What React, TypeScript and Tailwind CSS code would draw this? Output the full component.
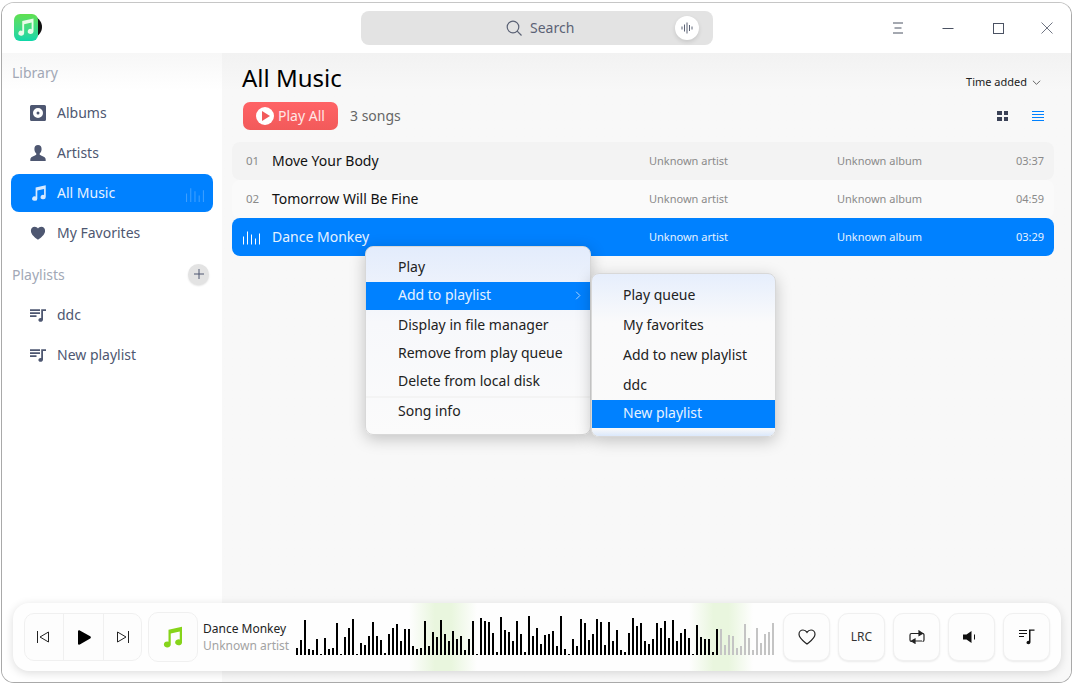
const playedHeights = [
  7, 15, 35, 6, 5, 16, 1, 17, 6, 7, 32, 1, 18, 27, 36, 1, 12, 10, 19, 33, 19, 15, 2, 21, 27, 31, 14, 26, 26, 9,
  6, 7, 34, 9, 23, 18, 35, 21, 14, 24, 16, 19, 5, 16, 34, 1, 37, 34, 33, 22, 3, 38, 25, 23, 14, 34, 21, 3, 39, 19,
  27, 11, 20, 21, 24, 9, 39, 6, 1, 16, 9, 36, 32, 15, 21, 36, 33, 10, 33, 14, 25, 5, 3, 22, 37, 29, 32, 14, 11, 16,
  32, 27, 34, 17, 35, 14, 22, 26, 17, 1, 30, 18, 16, 16, 3, 26,
];
const restHeights = [26, 10, 20, 19, 7, 9, 31, 17, 5, 27, 12, 21, 23, 32];

const songs = [
  { no: "01", title: "Move Your Body", time: "03:37", bg: "bg-[#f3f3f3]" },
  { no: "02", title: "Tomorrow Will Be Fine", time: "04:59", bg: "bg-[#fafafa]" },
  { no: "", title: "Dance Monkey", time: "03:29", bg: "bg-[#0081ff]" },
];

function NoteIcon({ className }: { className: string }) {
  return (
    <svg viewBox="0 0 16 16" className={className} fill="currentColor">
      <path d="M5 3.2 14 1.2V11.6A2.3 2 0 1 1 12.5 9.7V4.4L6.5 5.7V13A2.3 2 0 1 1 5 11.1Z" />
    </svg>
  );
}

function AlbumIcon() {
  return (
    <svg viewBox="0 0 16 16" className="h-4 w-4 text-[#4e5771]" fill="currentColor">
      <path
        fillRule="evenodd"
        d="M1.5 0h13A1.5 1.5 0 0 1 16 1.5v13a1.5 1.5 0 0 1-1.5 1.5h-13A1.5 1.5 0 0 1 0 14.500v-13A1.500 1.500 0 0 1 1.500 0ZM8 3a5 5 0 1 0 0 10A5 5 0 0 0 8 3Zm0 3.500a1.500 1.500 0 1 1 0 3 1.500 1.500 0 0 1 0-3Z"
      />
    </svg>
  );
}

function ArtistIcon() {
  return (
    <svg viewBox="0 0 16 16" className="h-4 w-4 text-[#4e5771]" fill="currentColor">
      <path d="M8 0c2.300 0 3.600 1.700 3.600 3.900 0 1.700-.7 3.300-1.700 4.300-.4.500-.3 1.500.3 1.900 1.500.9 4.700 1.800 5.300 3.500.2.700.2 1.500.2 2.400H.3c0-.9 0-1.700.2-2.400.6-1.700 3.800-2.600 5.300-3.500.6-.4.700-1.400.3-1.900-1-1-1.700-2.600-1.700-4.300C4.400 1.700 5.700 0 8 0Z" />
    </svg>
  );
}

function HeartIcon() {
  return (
    <svg viewBox="0 0 16 16" className="h-4 w-4 text-[#4e5771]" fill="currentColor">
      <path d="M8 14.800C5.500 12.800.9 9.800.9 5.700.9 3.300 2.700 1.700 4.700 1.700c1.400 0 2.600.7 3.300 1.900.7-1.200 1.900-1.900 3.300-1.900 2 0 3.800 1.600 3.800 4 0 4.100-4.600 7.100-7.100 9.100Z" />
    </svg>
  );
}

function PlaylistIcon() {
  return (
    <svg viewBox="0 0 16 16" className="h-4 w-4 text-[#4e5771]" fill="currentColor">
      <path d="M0 2.300h10v1.700H0ZM0 5.300h10v1.700H0ZM0 8.300h6.500v1.700H0ZM11.200 2.300H16v1.800h-3v8.400c0 1.400-1.200 2.300-2.500 2.300-1.200 0-2.100-.7-2.100-1.800 0-1.200 1-2 2.300-2 .2 0 .4 0 .5.100Z" />
    </svg>
  );
}

function EqIcon({ className }: { className: string }) {
  return (
    <svg viewBox="0 0 18 14" className={className} stroke="currentColor" strokeWidth="1" fill="none">
      <path d="M.5 14V6M4.500 14V1M8.500 14V4M12.500 14V8M16.500 14V3" />
    </svg>
  );
}

function Logo() {
  return (
    <div className="relative h-[27px] w-[28px]">
      <div className="absolute right-0 top-[2px] h-[22px] w-[14px] rounded-r-full bg-[#111]" />
      <div className="absolute left-0 top-0 flex h-[27px] w-[24px] items-center justify-center rounded-[6px] bg-gradient-to-b from-[#5fe04e] to-[#0bd6a8]">
        <NoteIcon className="h-[22px] w-[20px] text-[#e9fbe9]" />
      </div>
    </div>
  );
}

function SideItem({ label, icon, active }: { label: string; icon: React.ReactNode; active?: boolean }) {
  return (
    <div
      className={
        active
          ? "relative mx-[9px] flex h-[38px] items-center rounded-[8px] bg-[#0081ff] pl-[19px] text-[#e6f2ff]"
          : "mx-[9px] flex h-[40px] items-center pl-[19px] text-[#4e5771]"
      }
    >
      <div className="flex w-[27px] shrink-0">{icon}</div>
      <span className="pb-[2px] text-[14px]">{label}</span>
      {active && <EqIcon className="absolute right-[8px] top-[13px] h-[15px] w-[19px] text-[#3d9fff]" />}
    </div>
  );
}

function MenuRow({
  label,
  active,
  arrow,
  indent,
  line,
}: {
  label: string;
  active?: boolean;
  arrow?: boolean;
  indent: string;
  line?: boolean;
}) {
  return (
    <div
      className={`flex h-[28px] items-center justify-between text-[14px] ${indent} ${
        active ? "bg-[#0081ff] text-[#e6f2ff]" : "text-[#222]"
      } ${line ? "mb-[2px]" : ""}`}
    >
      <span className="pb-[4px]">{label}</span>
      {arrow && (
        <svg viewBox="0 0 8 12" className="mb-[2px] mr-[9px] h-[9px] w-[6px]" stroke="currentColor" fill="none">
          <path d="M1.500 1l5 5-5 5" />
        </svg>
      )}
    </div>
  );
}

function PlayerButton({ children }: { children: React.ReactNode }) {
  return (
    <div className="flex h-[48px] w-[47px] items-center justify-center rounded-[10px] border border-[#f0f0f0] bg-[#fdfdfd] shadow-[0_1px_2px_rgba(0,0,0,0.08)]">
      {children}
    </div>
  );
}

export default function App() {
  return (
    <div className="h-[684px] w-[1073px] bg-white pb-px pl-px pt-[2px] font-['Noto_Sans',sans-serif]">
      <div className="relative flex h-[681px] w-[1071px] flex-col overflow-hidden rounded-[13px] border border-[#a9a9a9] border-t-[#c6c6c6] bg-white">
        {/* title bar */}
        <div className="flex h-[50px] shrink-0 items-center bg-white">
          <div className="w-[359px] pl-[12px] pb-[2px]">
            <Logo />
          </div>
          <div className="flex h-[34px] w-[352px] items-center rounded-[8px] bg-[#e3e3e3] pb-[1px] pl-[145px] pr-[14px] text-[#5b6275]">
            <svg viewBox="0 0 16 16" className="h-[16px] w-[16px]" fill="none" stroke="currentColor" strokeWidth="1.200">
              <circle cx="7" cy="7" r="5.800" />
              <path d="M11.200 11.200 15.500 15.500" />
            </svg>
            <span className="ml-[8px] text-[14px]">Search</span>
            <div className="ml-auto flex h-[24px] w-[24px] items-center justify-center rounded-full bg-white shadow-[0_2px_4px_rgba(0,0,0,0.12)]">
              <svg viewBox="0 0 12 12" className="h-[12px] w-[12px]" stroke="currentColor" fill="none">
                <path d="M1 4.500v3M3.500 2.500v7M6 .500v11M8.500 3v6M11 4.500v3" />
              </svg>
            </div>
          </div>
          <div className="ml-auto flex items-center text-[#4b5263]">
            <div className="flex w-[50px] justify-center">
              <svg viewBox="0 0 12 12" className="h-[12px] w-[12px]" stroke="currentColor" fill="none">
                <path d="M1 1h10M2.500 6h7M1 11h10" />
              </svg>
            </div>
            <div className="flex w-[50px] justify-center">
              <svg viewBox="0 0 12 12" className="h-[12px] w-[12px]" stroke="currentColor" fill="none">
                <path d="M.5 6.500h11" />
              </svg>
            </div>
            <div className="flex w-[50px] justify-center">
              <svg viewBox="0 0 11 11" className="h-[11px] w-[11px]" stroke="currentColor" fill="none">
                <rect x=".5" y=".5" width="10" height="10" />
              </svg>
            </div>
            <div className="flex w-[48px] justify-center">
              <svg viewBox="0 0 12 12" className="h-[12px] w-[12px]" stroke="currentColor" strokeWidth=".8" fill="none">
                <path d="M.5.5l11 11M11.500.5l-11 11" />
              </svg>
            </div>
          </div>
        </div>

        <div className="flex min-h-0 flex-1">
          {/* sidebar */}
          <div className="w-[220px] shrink-0 bg-gradient-to-b from-[#f7f7f7] to-white to-[6%]">
            <div className="flex h-[40px] items-center pb-[2px] pl-[10px] text-[14px] text-[#a2a8b6]">Library</div>
            <SideItem label="Albums" icon={<AlbumIcon />} />
            <SideItem label="Artists" icon={<ArtistIcon />} />
            <div className="h-px" />
            <SideItem label="All Music" icon={<NoteIcon className="h-[18px] w-[18px] text-[#d5e9ff]" />} active />
            <div className="h-px" />
            <SideItem label="My Favorites" icon={<HeartIcon />} />
            <div className="flex h-[42px] items-center justify-between pl-[10px] pr-[13px] text-[14px] text-[#a2a8b6]">
              <span className="pt-[1px]">Playlists</span>
              <div className="flex h-[21px] w-[21px] items-center justify-center rounded-full bg-[#e3e3e3] shadow-[0_1px_2px_rgba(0,0,0,0.12)]">
                <svg viewBox="0 0 10 10" className="h-[10px] w-[10px] text-[#4e5771]" stroke="currentColor" fill="none">
                  <path d="M5 0v10M0 5h10" />
                </svg>
              </div>
            </div>
            <SideItem label="ddc" icon={<PlaylistIcon />} />
            <SideItem label="New playlist" icon={<PlaylistIcon />} />
          </div>

          {/* main */}
          <div className="flex-1 bg-gradient-to-b from-[#f2f2f2] to-[#f8f8f8] to-[6%] pl-[10px] pr-[17px]">
            <div className="flex h-[49px] items-center justify-between pl-[10px] pr-[13px]">
              <span className="text-[24px] text-black">All Music</span>
              <div className="mt-[10px] flex items-center gap-[5px] text-[11px] text-[#222]">
                <span>Time added</span>
                <svg viewBox="0 0 10 6" className="h-[6px] w-[9px] text-[#555]" stroke="currentColor" fill="none">
                  <path d="M1 .5l4 4 4-4" />
                </svg>
              </div>
            </div>
            <div className="flex h-[28px] items-center pl-[11px] pr-[10px]">
              <div className="flex h-[28px] w-[95px] items-center rounded-[7px] bg-gradient-to-b from-[#ff6366] to-[#f25a5a] pl-[13px] text-[14px] text-[#ffe6e6]">
                <div className="mr-[4px] flex h-[18px] w-[18px] items-center justify-center rounded-full bg-white">
                  <div className="ml-[2px] h-0 w-0 border-y-[5px] border-l-[8px] border-y-transparent border-l-[#f25a5a]" />
                </div>
                <span className="pb-[2px]">Play All</span>
              </div>
              <span className="ml-[12px] pb-[2px] text-[14px] text-[#666]">3 songs</span>
              <div className="ml-auto flex items-center">
                <div className="grid h-[10px] w-[11px] grid-cols-2 gap-[2px]">
                  <div className="bg-[#3b4257]" />
                  <div className="bg-[#3b4257]" />
                  <div className="bg-[#3b4257]" />
                  <div className="bg-[#3b4257]" />
                </div>
                <svg viewBox="0 0 12 10" className="ml-[24px] h-[10px] w-[12px] text-[#0081ff]" stroke="currentColor" fill="none">
                  <path d="M0 .5h12M0 3.500h12M0 6.500h12M0 9.500h12" />
                </svg>
              </div>
            </div>
            <div className="mt-[12px]">
              {songs.map((s) => {
                const on = s.no === "";
                return (
                  <div key={s.title} className={`flex h-[38px] items-center rounded-[8px] ${s.bg}`}>
                    <div className={`w-[40px] pl-[14px] text-[11.500px] ${on ? "text-white" : "text-[#8a8a8a]"}`}>
                      {on ? <EqIcon className="h-[15px] w-[18px] -translate-x-[3px]" /> : s.no}
                    </div>
                    <div className={`w-[377px] pb-[2px] text-[14px] ${on ? "text-[#e6f2ff]" : "text-[#111]"}`}>{s.title}</div>
                    <div className={`w-[188px] text-[11px] ${on ? "text-[#e6f2ff]" : "text-[#8a8a8a]"}`}>Unknown artist</div>
                    <div className={`flex-1 text-[11px] ${on ? "text-[#e6f2ff]" : "text-[#8a8a8a]"}`}>Unknown album</div>
                    <div className={`pr-[10px] text-[11px] ${on ? "text-[#e6f2ff]" : "text-[#8a8a8a]"}`}>{s.time}</div>
                  </div>
                );
              })}
            </div>
          </div>
        </div>

        {/* context menu */}
        <div className="absolute left-[363px] top-[243px] h-[189px] w-[226px] overflow-hidden rounded-[8px] border border-[#d8d8d8] bg-gradient-to-b from-[#e3ecfc] via-[#f7f8fb] via-[40%] to-[#fbfbfb] pt-[7px] shadow-[0_4px_16px_rgba(0,0,0,0.22)]">
          <MenuRow label="Play" indent="pl-[32px]" />
          <MenuRow label="Add to playlist" indent="pl-[32px]" active arrow line />
          <MenuRow label="Display in file manager" indent="pl-[32px]" />
          <MenuRow label="Remove from play queue" indent="pl-[32px]" />
          <MenuRow label="Delete from local disk" indent="pl-[32px]" />
          <div className="h-[2px] bg-[#f4f4f4]" />
          <MenuRow label="Song info" indent="pl-[32px]" />
        </div>

        {/* submenu */}
        <div className="absolute left-[589px] top-[270px] h-[164px] w-[185px] overflow-hidden rounded-[8px] border border-[#d8d8d8] bg-gradient-to-b from-[#e6eefc] via-[#fafafb] via-[30%] to-[#fafafa] pt-[7px] shadow-[0_4px_16px_rgba(0,0,0,0.22)]">
          <MenuRow label="Play queue" indent="pl-[31px] pt-[2px]" line />
          <MenuRow label="My favorites" indent="pl-[31px] pt-[2px]" line />
          <MenuRow label="Add to new playlist" indent="pl-[31px] pt-[2px]" line />
          <MenuRow label="ddc" indent="pl-[31px] pt-[2px]" />
          <div className="h-px" />
          <MenuRow label="New playlist" indent="pl-[31px]" active />
          <div className="h-[8px] bg-gradient-to-b from-[#fafafa] to-[#dbe8fb]" />
        </div>

        {/* player bar */}
        <div className="absolute bottom-[11px] left-[11px] right-[10px] flex h-[68px] items-center overflow-hidden rounded-[16px] bg-[#fefefe] pl-[11px] pr-[11px] shadow-[0_2px_10px_rgba(0,0,0,0.14)]">
          <div className="absolute inset-y-0 left-[396px] w-[68px] bg-[linear-gradient(90deg,transparent,#e9f6de_38%,#e9f6de_62%,transparent)]" />
          <div className="absolute inset-y-0 left-[676px] w-[64px] bg-[linear-gradient(90deg,transparent,#e9f6de_38%,#e9f6de_62%,transparent)]" />
          <div className="relative flex h-[48px] w-[118px] items-center rounded-[10px] border border-[#f0f0f0] bg-[#fdfdfd]">
            <div className="flex h-full w-[39px] items-center justify-center border-r border-[#f0f0f0] pr-[3px]">
              <svg viewBox="0 0 12 12" className="h-[12px] w-[12px] text-[#222]" stroke="currentColor" fill="none">
                <path d="M.5 0v12M11.500 1v10L3 6Z" />
              </svg>
            </div>
            <div className="flex h-full w-[40px] items-center justify-center border-r border-[#f0f0f0]">
              <svg viewBox="0 0 14 15" className="h-[15px] w-[14px] text-black" fill="currentColor">
                <path d="M1 1.500C1 .5 2 0 2.800.4l10.400 5.800c.9.500.9 1.800 0 2.300L2.800 14.600C2 15 1 14.500 1 13.500Z" />
              </svg>
            </div>
            <div className="flex h-full flex-1 items-center justify-center">
              <svg viewBox="0 0 12 12" className="h-[12px] w-[12px] text-[#222]" stroke="currentColor" fill="none">
                <path d="M11.500 0v12M.5 1v10L9 6Z" />
              </svg>
            </div>
          </div>
          <div className="relative ml-[6px] flex h-[50px] w-[50px] items-center justify-center rounded-[10px] border border-[#f0f0f0] bg-[#fdfdfd]">
            <NoteIcon className="h-[26px] w-[24px] text-[#86d41a]" />
          </div>
          <div className="relative ml-[5px] w-[93px] shrink-0 leading-[17px]">
            <div className="text-[12px] text-[#222]">Dance Monkey</div>
            <div className="text-[12px] text-[#a3a3a3]">Unknown artist</div>
          </div>
          <div className="relative mt-[12px] flex h-[40px] items-end gap-[2px] self-start">
            {playedHeights.map((h, i) => (
              <div key={i} className="w-[2px] bg-black" style={{ height: h }} />
            ))}
            {restHeights.map((h, i) => (
              <div key={i} className="w-[2px] bg-[#c4c4c4]" style={{ height: h }} />
            ))}
          </div>
          <div className="relative ml-auto flex gap-[8px]">
            <PlayerButton>
              <svg viewBox="0 0 18 16" className="h-[16px] w-[18px] text-[#222]" stroke="currentColor" fill="none" strokeWidth="1.200">
                <path d="M9 15C6 12.500 1 9.500 1 5.300 1 2.800 3 1 5 1c1.700 0 3 .8 4 2.300C10 1.800 11.300 1 13 1c2 0 4 1.800 4 4.300C17 9.500 12 12.500 9 15Z" />
              </svg>
            </PlayerButton>
            <PlayerButton>
              <span className="text-[12px] text-[#333]">LRC</span>
            </PlayerButton>
            <PlayerButton>
              <svg viewBox="0 0 16 14" className="h-[14px] w-[16px] text-[#222]" stroke="currentColor" fill="none" strokeWidth="1.200">
                <path d="M3 11.500H2.500A1.500 1.500 0 0 1 1 10V5a1.500 1.500 0 0 1 1.500-1.500H13M13 11H5M13 3.500A1.500 1.500 0 0 1 15 5v5a1.500 1.500 0 0 1-1.500 1.500" />
                <path d="M10 1l3.500 2.500L10 5.500Z" fill="currentColor" />
                <path d="M6 9L2.500 11 6 13.200Z" fill="currentColor" />
              </svg>
            </PlayerButton>
            <PlayerButton>
              <svg viewBox="0 0 13 12" className="mr-[4px] h-[12px] w-[13px] text-[#111]" fill="currentColor">
                <path d="M0 3.500h3.500L8.500 0v12L3.500 8.500H0Z" />
                <path d="M11 3.500h1v5h-1Z" />
              </svg>
            </PlayerButton>
            <PlayerButton>
              <svg viewBox="0 0 16 16" className="h-[16px] w-[16px] text-[#111]" fill="currentColor">
                <path d="M0 1h8v1H0ZM0 4h8v1H0ZM0 7h5v1H0ZM10 .5h5.500v1.300h-4V13c0 1.300-1 2.300-2.200 2.300-1 0-1.800-.7-1.800-1.700 0-1.100 1-1.900 2-1.900.2 0 .4 0 .5.100Z" />
              </svg>
            </PlayerButton>
          </div>
        </div>
      </div>
    </div>
  );
}
